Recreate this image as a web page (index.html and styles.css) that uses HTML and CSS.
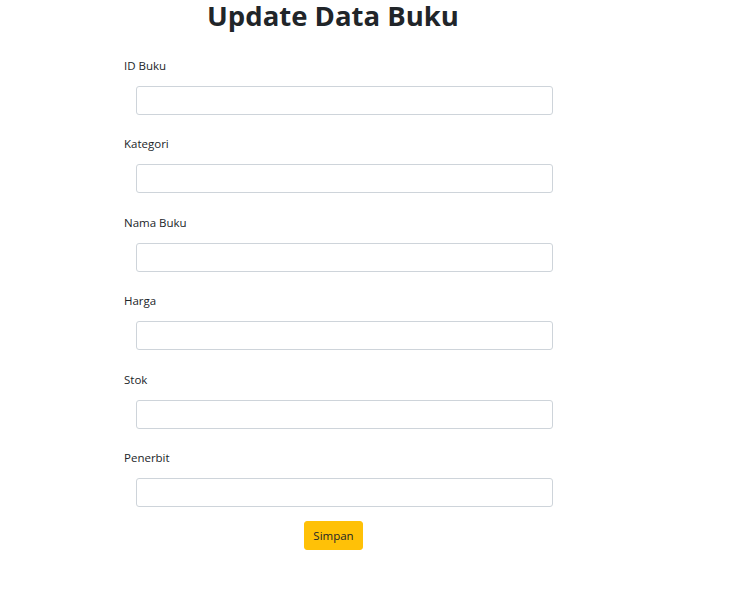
FILE: index.html
```html
<!DOCTYPE html>
<html lang="id">
<head>
<meta charset="utf-8">
<title>Update Data Buku</title>
<link rel="stylesheet" href="styles.css">
</head>
<body>
<div class="wrap">
  <h1 class="title">Update Data Buku</h1>
  <form class="form">
    <div class="group">
      <label class="label">ID Buku</label>
      <input class="input" type="text">
    </div>
    <div class="group">
      <label class="label">Kategori</label>
      <input class="input" type="text">
    </div>
    <div class="group">
      <label class="label">Nama Buku</label>
      <input class="input" type="text">
    </div>
    <div class="group">
      <label class="label">Harga</label>
      <input class="input" type="text">
    </div>
    <div class="group">
      <label class="label">Stok</label>
      <input class="input" type="text">
    </div>
    <div class="group last">
      <label class="label">Penerbit</label>
      <input class="input" type="text">
    </div>
    <div class="actions">
      <button class="btn" type="button">Simpan</button>
    </div>
  </form>
</div>
</body>
</html>
```
FILE: styles.css
```css
html, body {
  margin: 0;
  padding: 0;
  background: #ffffff;
}
body {
  font-family: "Open Sans", "Noto Sans", "Liberation Sans", sans-serif;
  color: #212529;
}
.wrap {
  width: 418px;
  margin-left: 124px;
}
.title {
  margin: 0;
  font-size: 27.5px;
  line-height: 32px;
  font-weight: 700;
  text-align: center;
  color: #212529;
}
.form {
  margin-top: 25px;
}
.group {
  display: flex;
  flex-direction: column;
  align-items: flex-start;
  margin-bottom: 20.4px;
}
.group.last {
  margin-bottom: 14px;
}
.label {
  font-size: 11.5px;
  line-height: 18px;
  margin-bottom: 11px;
}
.input {
  box-sizing: border-box;
  margin-left: 12px;
  width: 417px;
  height: 29px;
  border: 1px solid #ced4da;
  border-radius: 3px;
  background: #fff;
  padding: 0 8px;
  font: inherit;
}
.actions {
  display: flex;
  justify-content: center;
  padding-left: 1px;
}
.btn {
  box-sizing: border-box;
  width: 59px;
  height: 29px;
  background: #ffc107;
  border: 1px solid #ffc107;
  border-radius: 3px;
  font-family: "Open Sans", "Noto Sans", "Liberation Sans", sans-serif;
  font-size: 11.5px;
  color: #212529;
  padding: 0;
}
```
